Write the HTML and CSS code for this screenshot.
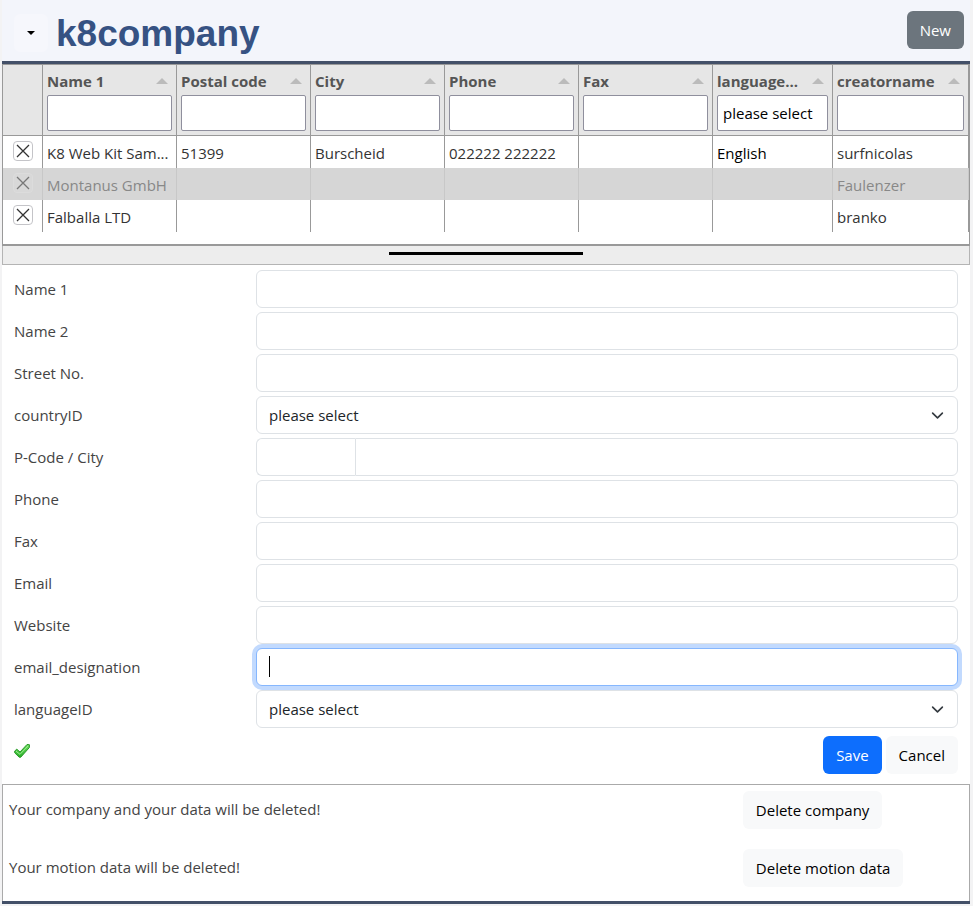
FILE: index.html
```html
<!DOCTYPE html>
<html lang="en">
<head>
<meta charset="utf-8">
<title>k8company</title>
<link rel="stylesheet" href="styles.css">
</head>
<body>
<div class="page">
  <header class="topbar">
    <button class="btn btn-light menu-btn" type="button" aria-label="Menu"><span class="caret-down"></span></button>
    <h1>k8company</h1>
    <button class="btn btn-secondary" type="button">New</button>
  </header>

  <div class="grid-wrap">
    <table class="grid">
      <colgroup>
        <col class="col-tools"><col class="col-text"><col class="col-text"><col class="col-text"><col class="col-text"><col class="col-text"><col class="col-lang"><col class="col-creator">
      </colgroup>
      <thead>
        <tr>
          <th></th>
          <th><div class="th-title"><span>Name 1</span><i class="sort"></i></div><input type="text" aria-label="Name 1"></th>
          <th><div class="th-title"><span>Postal code</span><i class="sort"></i></div><input type="text" aria-label="Postal code"></th>
          <th><div class="th-title"><span>City</span><i class="sort"></i></div><input type="text" aria-label="City"></th>
          <th><div class="th-title"><span>Phone</span><i class="sort"></i></div><input type="text" aria-label="Phone"></th>
          <th><div class="th-title"><span>Fax</span><i class="sort"></i></div><input type="text" aria-label="Fax"></th>
          <th><div class="th-title"><span>language...</span><i class="sort"></i></div><select aria-label="language"><option>please select</option></select></th>
          <th><div class="th-title"><span>creatorname</span><i class="sort"></i></div><input type="text" aria-label="creatorname"></th>
        </tr>
      </thead>
      <tbody>
        <tr>
          <td><button class="del" type="button" aria-label="Delete"><svg viewBox="0 0 18 18"><path d="M3 3 15 15M15 3 3 15"/></svg></button></td>
          <td>K8 Web Kit Sam...</td><td>51399</td><td>Burscheid</td><td>022222 222222</td><td></td><td class="strong-text">English</td><td>surfnicolas</td>
        </tr>
        <tr class="disabled">
          <td><button class="del" type="button" aria-label="Delete" disabled><svg viewBox="0 0 18 18"><path d="M3 3 15 15M15 3 3 15"/></svg></button></td>
          <td>Montanus GmbH</td><td></td><td></td><td></td><td></td><td></td><td>Faulenzer</td>
        </tr>
        <tr>
          <td><button class="del" type="button" aria-label="Delete"><svg viewBox="0 0 18 18"><path d="M3 3 15 15M15 3 3 15"/></svg></button></td>
          <td>Falballa LTD</td><td></td><td></td><td></td><td></td><td></td><td>branko</td>
        </tr>
      </tbody>
    </table>
  </div>
  <div class="splitter"><span></span></div>

  <form class="details">
    <label for="name1">Name 1</label><input class="control" id="name1" type="text">
    <label for="name2">Name 2</label><input class="control" id="name2" type="text">
    <label for="street">Street No.</label><input class="control" id="street" type="text">
    <label for="country">countryID</label>
    <div class="select-wrap"><select class="control" id="country"><option>please select</option></select><svg viewBox="0 0 16 16"><path d="m2 5 6 6 6-6"/></svg></div>
    <label for="pcode">P-Code / City</label>
    <div class="group"><input class="control pcode" id="pcode" type="text"><input class="control city" type="text" aria-label="City"></div>
    <label for="phone">Phone</label><input class="control" id="phone" type="text">
    <label for="fax">Fax</label><input class="control" id="fax" type="text">
    <label for="email">Email</label><input class="control" id="email" type="text">
    <label for="website">Website</label><input class="control" id="website" type="text">
    <label for="designation">email_designation</label>
    <div class="caret-wrap"><input class="control" id="designation" type="text" autofocus><span class="text-caret"></span></div>
    <label for="language">languageID</label>
    <div class="select-wrap"><select class="control" id="language"><option>please select</option></select><svg viewBox="0 0 16 16"><path d="m2 5 6 6 6-6"/></svg></div>
    <div class="actions">
      <svg class="tick" viewBox="0 0 16 16">
        <defs><linearGradient id="green" x1="0" y1="0" x2="0" y2="1"><stop offset="0" stop-color="#6fdc62"/><stop offset="1" stop-color="#25ad25"/></linearGradient></defs>
        <path d="M.7 8 2.800 6.200 6 9 13 1.500 15.400 1.700 15.400 4.500 6.700 14.300 5.300 14.300 .7 9.800z" fill="url(#green)" stroke="#2a9a29"/>
        <path d="M2 8.200 6 11.300 14.200 2.800" fill="none" stroke="#9bee90"/>
      </svg>
      <button class="btn btn-primary" type="button">Save</button>
      <button class="btn btn-light" type="button">Cancel</button>
    </div>
  </form>

  <section class="danger">
    <p>Your company and your data will be deleted!</p>
    <div><button class="btn btn-light" type="button">Delete company</button></div>
    <p>Your motion data will be deleted!</p>
    <div><button class="btn btn-light" type="button">Delete motion data</button></div>
  </section>
</div>
</body>
</html>
```
FILE: styles.css
```css
* { box-sizing: border-box; }

body {
  margin: 0;
  background: #f3f3f4;
  color: #444;
  font: 15px/24px "Open Sans", "Noto Sans", sans-serif;
}

input, select, button { font: inherit; }

.page {
  margin: 0 3px 0 2px;
  background: #fff;
  border-bottom: 3px solid #435068;
}

.topbar {
  display: flex;
  align-items: center;
  gap: 8px;
  height: 64px;
  padding: 0 6px 2px 12px;
  background: #f3f5fb;
  border-bottom: 3px solid #435068;
}

.topbar h1 {
  flex: 1;
  margin: 0;
  padding: 8px 0 0;
  color: #365283;
  font: bold 37px/44px "Liberation Sans", Arial, sans-serif;
}

.btn {
  height: 38px;
  padding: 0 13px;
  border: 0;
  border-radius: 6px;
  cursor: pointer;
}

.btn-light { background: #f8f9fa; color: #000; }
.btn-primary { background: #0d6efd; color: #fff; }
.btn-secondary { background: #6c757d; color: #fff; }

.menu-btn {
  display: flex;
  align-items: center;
  background: #f6f7fc;
  margin-top: 6px;
}

.caret-down {
  border: 4px solid transparent;
  border-top-color: #000;
  border-bottom: 0;
}

.grid-wrap {
  padding-bottom: 12px;
  border: 1px solid #999;
  border-bottom-width: 2px;
}

.grid {
  width: 100%;
  table-layout: fixed;
  border-collapse: separate;
  border-spacing: 0;
}

.col-tools { width: 40px; }
.col-lang { width: 120px; }
.col-creator { width: 136px; }

.grid th {
  height: 71px;
  padding: 4px;
  border-right: 1px solid #999;
  border-bottom: 1px solid #999;
  background: #e6e6e6;
  color: #555;
  text-align: left;
  vertical-align: top;
}

.th-title {
  display: flex;
  align-items: center;
  justify-content: space-between;
  height: 24px;
  margin-bottom: 2px;
  padding-right: 4px;
}

.sort {
  border: 6px solid transparent;
  border-top: 0;
  border-bottom-color: #bbb;
}

.grid th input,
.grid th select {
  display: block;
  width: 100%;
  height: 36px;
  padding: 0 5px;
  border: 1px solid #8f8f9d;
  border-radius: 2px;
  background: #fff;
  color: #000;
  font-weight: 400;
  appearance: none;
}

.grid td {
  height: 32px;
  padding: 2px 4px 0;
  border-right: 1px solid #999;
  color: #333;
  white-space: nowrap;
  overflow: hidden;
}

.grid td:first-child { padding: 0 0 2px 10px; }
.grid td.strong-text { color: #000; }

.grid .disabled td {
  background: #d6d6d6;
  border-color: #c8c8c8;
  color: #888;
}

.del {
  display: block;
  width: 20px;
  height: 20px;
  padding: 0;
  border: 1px solid #c4c4c8;
  border-radius: 4px;
  background: #fff;
}

.del svg {
  display: block;
  width: 18px;
  height: 18px;
  fill: none;
  stroke: #333;
  stroke-width: 1.3;
}

.del:disabled { border-color: #dcdcdc; background: #d8d8d8; }
.del:disabled svg { stroke: #777; }

.splitter {
  display: flex;
  justify-content: center;
  height: 19px;
  padding-top: 6px;
  border: 1px solid #b4b4b4;
  border-top: 0;
  background: #ededed;
}

.splitter span {
  width: 20%;
  height: 3px;
  background: #000;
}

.details {
  display: grid;
  grid-template-columns: 1fr 3fr;
  gap: 4px 8px;
  align-items: center;
  padding: 5px 12px 10px;
}

.control {
  display: block;
  width: 100%;
  height: 38px;
  padding: 0 12px;
  border: 1px solid #dee2e6;
  border-radius: 6px;
  background: #fff;
  color: #212529;
  appearance: none;
}

.control:focus {
  border-color: #86b7fe;
  outline: 0;
  box-shadow: 0 0 0 4px #c2dafe;
}

.caret-wrap { position: relative; z-index: 1; }
.caret-wrap .control { caret-color: transparent; }

.text-caret {
  display: none;
  position: absolute;
  top: 8px;
  left: 13px;
  width: 1px;
  height: 21px;
  background: #000;
}

.control:focus:placeholder-shown + .text-caret,
.control:focus + .text-caret { display: block; }

.select-wrap { position: relative; }

.select-wrap svg {
  position: absolute;
  top: 13px;
  right: 14px;
  width: 13px;
  height: 13px;
  fill: none;
  stroke: #343a40;
  stroke-width: 2;
  stroke-linecap: round;
  stroke-linejoin: round;
  pointer-events: none;
}

.group { display: flex; }
.pcode { width: 99px; border-right: 0; border-radius: 6px 0 0 6px; }
.city { flex: 1; border-radius: 0 6px 6px 0; }

.actions {
  grid-column: 1 / -1;
  display: flex;
  align-items: center;
  gap: 4px;
  margin-top: 4px;
}

.tick {
  width: 16px;
  height: 16px;
  margin: 0 auto 8px 0;
}

.danger {
  display: grid;
  grid-template-columns: 10fr 3fr;
  row-gap: 20px;
  padding: 6px 6px 14px;
  border: 1px solid #aaa;
  border-bottom: 0;
}

.danger p { margin: 6px 0 0; }
```
